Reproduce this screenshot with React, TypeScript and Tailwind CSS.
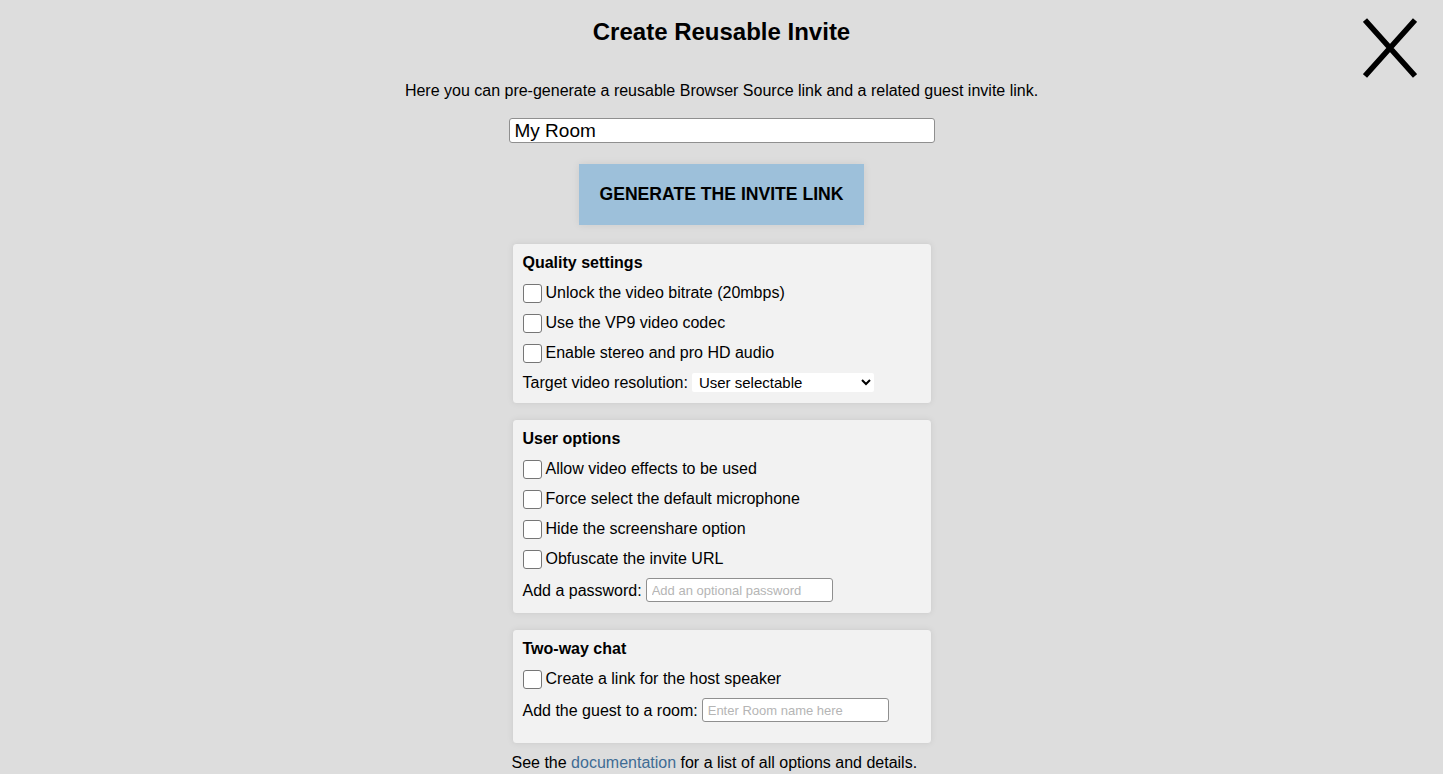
import React from 'react';

const font = { fontFamily: '"Liberation Sans", Arial, sans-serif' };

const Check: React.FC<{ label: string }> = ({ label }) => (
  <label className="flex h-[30px] items-center">
    <input
      type="checkbox"
      className="mr-[4px] h-[19px] w-[19px] appearance-none rounded-[3px] border-[1.5px] border-[#767676] bg-white"
    />
    <span>{label}</span>
  </label>
);

const Panel: React.FC<{ title: string; last?: boolean; children: React.ReactNode }> = ({ title, last, children }) => (
  <div
    className={
      'w-[420px] rounded-[4px] border border-[#d4d4d4] bg-[#f2f2f2] px-[10px] pt-[4px] text-left shadow-[0_0_6px_rgba(0,0,0,0.06)] ' +
      (last ? 'pb-[15px]' : 'pb-[5px]')
    }
  >
    <div className="flex h-[30px] items-center font-bold">{title}</div>
    {children}
  </div>
);

export default function App() {
  return (
    <div style={font} className="relative min-h-screen bg-[#dddddd] text-[16px] text-black">
      {/* close button */}
      <button className="absolute right-[26px] top-[18px] h-[60px] w-[54px]">
        <svg viewBox="0 0 54 60" className="h-[60px] w-[54px]">
          <path d="M2 2 L52 58 M52 2 L2 58" stroke="#000" strokeWidth="5.5" fill="none" />
        </svg>
      </button>

      <div className="flex flex-col items-center">
        <h1 className="mt-[18px] h-[28px] text-[24px] font-bold leading-[28px]">Create Reusable Invite</h1>

        <p className="mt-[36px] leading-[18px]">
          Here you can pre-generate a reusable Browser Source link and a related guest invite link.
        </p>

        <input
          defaultValue="My Room"
          className="mt-[18px] h-[25px] w-[426px] rounded-[3px] border border-[#8f8f8f] bg-white px-[5px] text-[19px] leading-[23px] outline-none"
        />

        <button className="mt-[21px] h-[61px] w-[285px] bg-[#9dc0da] text-[17.6px] font-bold shadow-[0_0_8px_rgba(0,0,0,0.08)]">
          GENERATE THE INVITE LINK
        </button>

        <div className="mt-[18px] flex flex-col gap-[15px]">
          <Panel title="Quality settings">
            <Check label="Unlock the video bitrate (20mbps)" />
            <Check label="Use the VP9 video codec" />
            <Check label="Enable stereo and pro HD audio" />
            <div className="flex h-[30px] items-center">
              <span>Target video resolution:</span>
              <select className="ml-[4px] mb-[1px] h-[19px] w-[182px] rounded-[2px] bg-white pl-[3px] text-[15px] outline-none">
                <option>User selectable</option>
              </select>
            </div>
          </Panel>

          <Panel title="User options">
            <Check label="Allow video effects to be used" />
            <Check label="Force select the default microphone" />
            <Check label="Hide the screenshare option" />
            <Check label="Obfuscate the invite URL" />
            <div className="flex h-[34px] items-center">
              <span>Add a password:</span>
              <input
                placeholder="Add an optional password"
                className="ml-[4px] mb-[2px] h-[24px] w-[187px] rounded-[3px] border border-[#8f8f8f] bg-white px-[5px] text-[13px] outline-none placeholder:text-[#b5b5b5]"
              />
            </div>
          </Panel>

          <Panel title="Two-way chat" last>
            <Check label="Create a link for the host speaker" />
            <div className="flex h-[34px] items-center">
              <span>Add the guest to a room:</span>
              <input
                placeholder="Enter Room name here"
                className="ml-[4px] mb-[2px] h-[24px] w-[187px] rounded-[3px] border border-[#8f8f8f] bg-white px-[5px] text-[13px] outline-none placeholder:text-[#b5b5b5]"
              />
            </div>
          </Panel>
        </div>

        <p className="mt-[10px] w-[420px] text-left leading-[18px]">
          See the <a className="text-[#3f6c94]">documentation</a> for a list of all options and details.
        </p>
      </div>
    </div>
  );
}
